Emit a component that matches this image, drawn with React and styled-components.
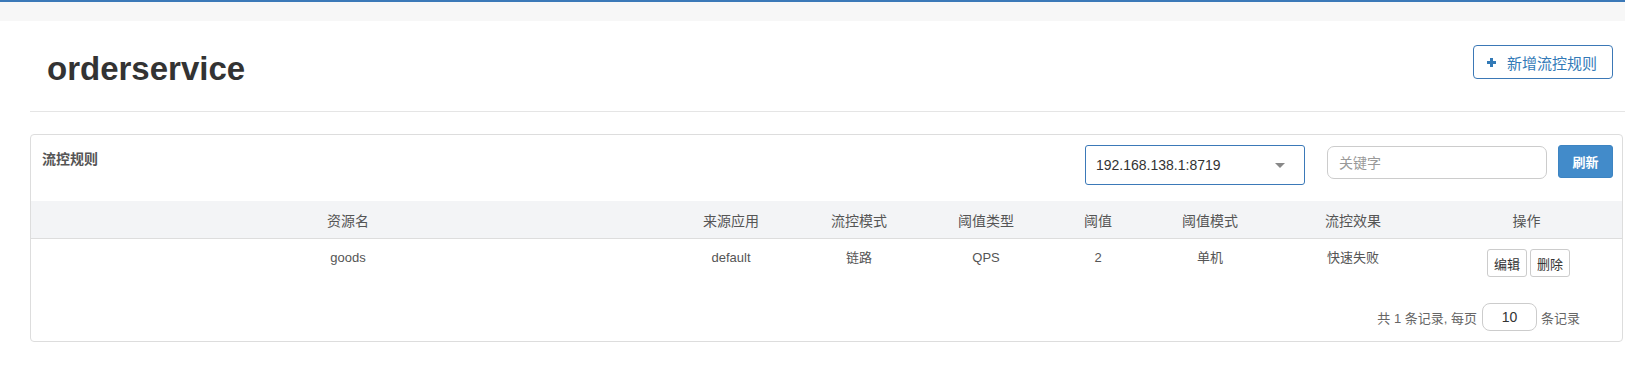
import React from "react";
import styled, { createGlobalStyle } from "styled-components";

const GlobalStyle = createGlobalStyle`
  html, body { margin: 0; padding: 0; background: #fff; }
  body {
    font-family: "Liberation Sans", "Noto Sans CJK SC", sans-serif;
    color: #333;
  }
  * { box-sizing: border-box; }
`;

const TopStrip = styled.div`
  height: 21px;
  border-top: 2px solid #3b79b8;
  background: #f7f7f7;
`;

const Content = styled.div`
  padding-left: 30px;
`;

const PageHeader = styled.div`
  display: flex;
  justify-content: space-between;
  align-items: flex-start;
  height: 91px;
  padding: 24px 12px 0 17px;
  border-bottom: 1px solid #e5e5e5;
`;

const Title = styled.h1`
  margin: 6px 0 0;
  font-size: 33px;
  line-height: 1.1;
  font-weight: bold;
  color: #333;
`;

const AddButton = styled.button`
  display: flex;
  align-items: center;
  gap: 11px;
  width: 140px;
  height: 34px;
  padding: 0 0 0 13px;
  border: 1px solid #3b78b6;
  border-radius: 4px;
  background: #fff;
  color: #337ab7;
  font-family: inherit;
  font-size: 15px;
`;

const Panel = styled.div`
  margin: 22px 2px 0 0;
  border: 1px solid #ddd;
  border-radius: 4px;
`;

const PanelHeading = styled.div`
  display: flex;
  align-items: flex-start;
  height: 66px;
  padding: 10px 9px 0 11px;
`;

const HeadingTitle = styled.div`
  flex: 1;
  margin-top: 4px;
  font-size: 14px;
  line-height: 20px;
  font-weight: bold;
  color: #555;
`;

const Select = styled.div`
  display: flex;
  align-items: center;
  justify-content: space-between;
  width: 220px;
  height: 40px;
  margin-right: 22px;
  padding: 0 19px 0 10px;
  border: 1px solid #3b79b8;
  border-radius: 3px;
  font-size: 14px;
  color: #333;
`;

const Caret = styled.span`
  width: 0;
  height: 0;
  border-top: 5px solid #888;
  border-left: 5px solid transparent;
  border-right: 5px solid transparent;
`;

const SearchInput = styled.input`
  width: 220px;
  height: 33px;
  margin: 1px 11px 0 0;
  padding: 0 11px;
  border: 1px solid #ccc;
  border-radius: 7px;
  font-family: inherit;
  font-size: 14px;
  color: #333;
  outline: none;
  &::placeholder { color: #999; }
`;

const RefreshButton = styled.button`
  width: 55px;
  height: 33px;
  padding: 0;
  border: 1px solid #3d84c2;
  border-radius: 3px;
  background: #428bca;
  color: #fff;
  font-family: inherit;
  font-size: 13px;
  font-weight: bold;
`;

const COLS = "634px 132px 124px 130px 94px 130px 156px 191px";

const HeadRow = styled.div`
  display: grid;
  grid-template-columns: ${COLS};
  align-items: center;
  height: 38px;
  background: #f3f4f6;
  border-bottom: 1px solid #ddd;
  font-size: 14px;
  color: #555;
  text-align: center;
`;

const BodyRow = styled.div`
  display: grid;
  grid-template-columns: ${COLS};
  align-items: start;
  padding: 10px 0;
  font-size: 13px;
  line-height: 18px;
  color: #555;
  text-align: center;
`;

const Actions = styled.div`
  display: flex;
  justify-content: center;
  gap: 3px;
  padding-left: 4px;
`;

const SmallButton = styled.button`
  width: 40px;
  height: 28px;
  padding: 0;
  border: 1px solid #ccc;
  border-radius: 3px;
  background: #fff;
  color: #333;
  font-family: inherit;
  font-size: 13px;
`;

const Footer = styled.div`
  display: flex;
  justify-content: flex-end;
  align-items: center;
  padding: 16px 42px 10px 0;
  font-size: 13px;
  color: #666;
`;

const PageSize = styled.input`
  width: 55px;
  height: 28px;
  margin: 0 4px 0 5px;
  border: 1px solid #ccc;
  border-radius: 8px;
  text-align: center;
  font-family: inherit;
  font-size: 14px;
  color: #333;
  outline: none;
`;

const PlusIcon = () => (
  <svg width="9" height="9" viewBox="0 0 9 9">
    <rect x="3" y="0" width="3" height="9" fill="#337ab7" />
    <rect x="0" y="3" width="9" height="3" fill="#337ab7" />
  </svg>
);

const headers = ["资源名", "来源应用", "流控模式", "阈值类型", "阈值", "阈值模式", "流控效果", "操作"];
const rows = [
  { resource: "goods", limitApp: "default", strategy: "链路", grade: "QPS", count: "2", cluster: "单机", behavior: "快速失败" },
];

const App = () => {
  return (
    <>
      <GlobalStyle />
      <TopStrip />
      <Content>
        <PageHeader>
          <Title>orderservice</Title>
          <AddButton>
            <PlusIcon />
            新增流控规则
          </AddButton>
        </PageHeader>
        <Panel>
          <PanelHeading>
            <HeadingTitle>流控规则</HeadingTitle>
            <Select>
              <span>192.168.138.1:8719</span>
              <Caret />
            </Select>
            <SearchInput placeholder="关键字" />
            <RefreshButton>刷新</RefreshButton>
          </PanelHeading>
          <HeadRow>
            {headers.map((h) => (
              <div key={h}>{h}</div>
            ))}
          </HeadRow>
          {rows.map((r) => (
            <BodyRow key={r.resource}>
              <div>{r.resource}</div>
              <div>{r.limitApp}</div>
              <div>{r.strategy}</div>
              <div>{r.grade}</div>
              <div>{r.count}</div>
              <div>{r.cluster}</div>
              <div>{r.behavior}</div>
              <Actions>
                <SmallButton>编辑</SmallButton>
                <SmallButton>删除</SmallButton>
              </Actions>
            </BodyRow>
          ))}
          <Footer>
            共 1 条记录, 每页
            <PageSize defaultValue="10" />
            条记录
          </Footer>
        </Panel>
      </Content>
    </>
  );
};

export default App;
